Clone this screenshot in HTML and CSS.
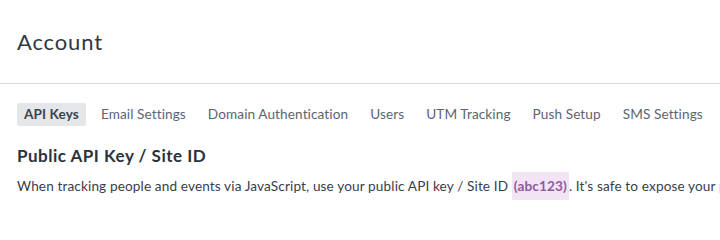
FILE: index.html
```html
<!DOCTYPE html>
<html lang="en">
<head>
<meta charset="utf-8">
<title>Account</title>
<link rel="stylesheet" href="styles.css">
</head>
<body>
<header class="page-header">
  <h1 class="page-title">Account</h1>
</header>
<main class="content">
  <nav class="tabs">
    <a class="tab active">API Keys</a>
    <a class="tab">Email Settings</a>
    <a class="tab">Domain Authentication</a>
    <a class="tab">Users</a>
    <a class="tab">UTM Tracking</a>
    <a class="tab">Push Setup</a>
    <a class="tab">SMS Settings</a>
  </nav>
  <section class="section">
    <h2 class="section-title">Public API Key / Site ID</h2>
    <p class="section-text">When tracking people and events via JavaScript, use your public API key / Site ID <code class="key">(abc123)</code>. It's safe to expose your public API key / Site ID in your website's code.</p>
  </section>
</main>
</body>
</html>
```

FILE: styles.css
```css
* { box-sizing: border-box; }
html, body { margin: 0; padding: 0; background: #fff; }
body {
  font-family: "Lato", "Noto Sans", sans-serif;
  color: #37414b;
  width: 720px;
  height: 218px;
  overflow: hidden;
}
.page-header {
  height: 84px;
  border-bottom: 1px solid #d8d9de;
  padding: 29px 17px 0;
}
.page-title {
  margin: 0;
  font-size: 22px;
  font-weight: 400;
  line-height: 26px;
  letter-spacing: 0.85px;
  color: #2f3841;
}
.content {
  padding: 19px 17px 0;
}
.tabs {
  display: flex;
  gap: 8px;
  white-space: nowrap;
}
.tab {
  display: block;
  height: 23px;
  line-height: 23px;
  padding: 0 7px;
  font-size: 13.6px;
  letter-spacing: 0.1px;
  color: #5b6570;
  border-radius: 2px;
}
.tab.active {
  background: #e4e6e9;
  color: #3b444d;
  font-weight: 700;
}
.section { padding-top: 19px; }
.section-title {
  margin: 0;
  font-size: 17px;
  font-weight: 700;
  line-height: 22px;
  letter-spacing: 0.5px;
  color: #2a323b;
}
.section-text {
  margin: 5px 0 0;
  font-size: 13.6px;
  line-height: 28px;
  letter-spacing: 0.13px;
  white-space: nowrap;
  color: #37414b;
}
.key {
  font-family: inherit;
  font-weight: 700;
  color: #8c5b9c;
  background: #f3e4f5;
  padding: 6px 2px;
}
```
